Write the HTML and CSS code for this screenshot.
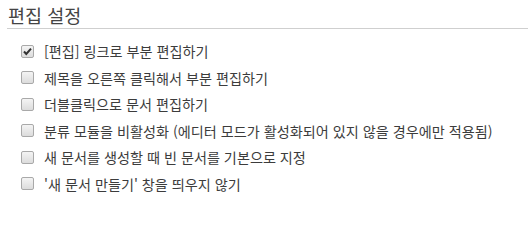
FILE: index.html
```html
<!DOCTYPE html>
<html lang="ko">
<head>
<meta charset="utf-8">
<link rel="stylesheet" href="styles.css">
</head>
<body>
<section class="settings">
  <h2 class="settings-title">편집 설정</h2>
  <ul class="option-list">
    <li class="option"><span class="box checked"><svg viewBox="0 0 13 13" width="13" height="13"><path d="M3 6.5 L5.3 9 L10 3.6" fill="none" stroke="#333" stroke-width="2"/></svg></span><span class="label">[편집] 링크로 부분 편집하기</span></li>
    <li class="option"><span class="box"></span><span class="label">제목을 오른쪽 클릭해서 부분 편집하기</span></li>
    <li class="option"><span class="box"></span><span class="label">더블클릭으로 문서 편집하기</span></li>
    <li class="option"><span class="box"></span><span class="label">분류 모듈을 비활성화 (에디터 모드가 활성화되어 있지 않을 경우에만 적용됨)</span></li>
    <li class="option"><span class="box"></span><span class="label">새 문서를 생성할 때 빈 문서를 기본으로 지정</span></li>
    <li class="option"><span class="box"></span><span class="label">'새 문서 만들기' 창을 띄우지 않기</span></li>
  </ul>
</section>
</body>
</html>
```
FILE: styles.css
```css
html, body {
  margin: 0;
  padding: 0;
  background: #fff;
}
body {
  font-family: "Noto Sans CJK KR", "Noto Sans", sans-serif;
  color: #3c3c3c;
}
.settings {
  padding: 4px 1px 0 7px;
}
.settings-title {
  margin: 0;
  font-size: 18.5px;
  font-weight: normal;
  line-height: 22px;
  padding: 0 0 2px 1px;
  border-bottom: 1px solid #cfcfcf;
  color: #444;
}
.option-list {
  list-style: none;
  margin: 9px 0 0 14px;
  padding: 0;
}
.option {
  display: flex;
  align-items: center;
  height: 26.5px;
  font-size: 14.15px;
}
.box {
  width: 11px;
  height: 11px;
  border: 1px solid #a9a9a9;
  border-radius: 2px;
  background: linear-gradient(#f4f4f4, #dcdcdc);
  margin-right: 10px;
  flex: none;
  position: relative;
}
.box svg {
  position: absolute;
  left: -1px;
  top: -1px;
}
.label {
  white-space: nowrap;
}
```
